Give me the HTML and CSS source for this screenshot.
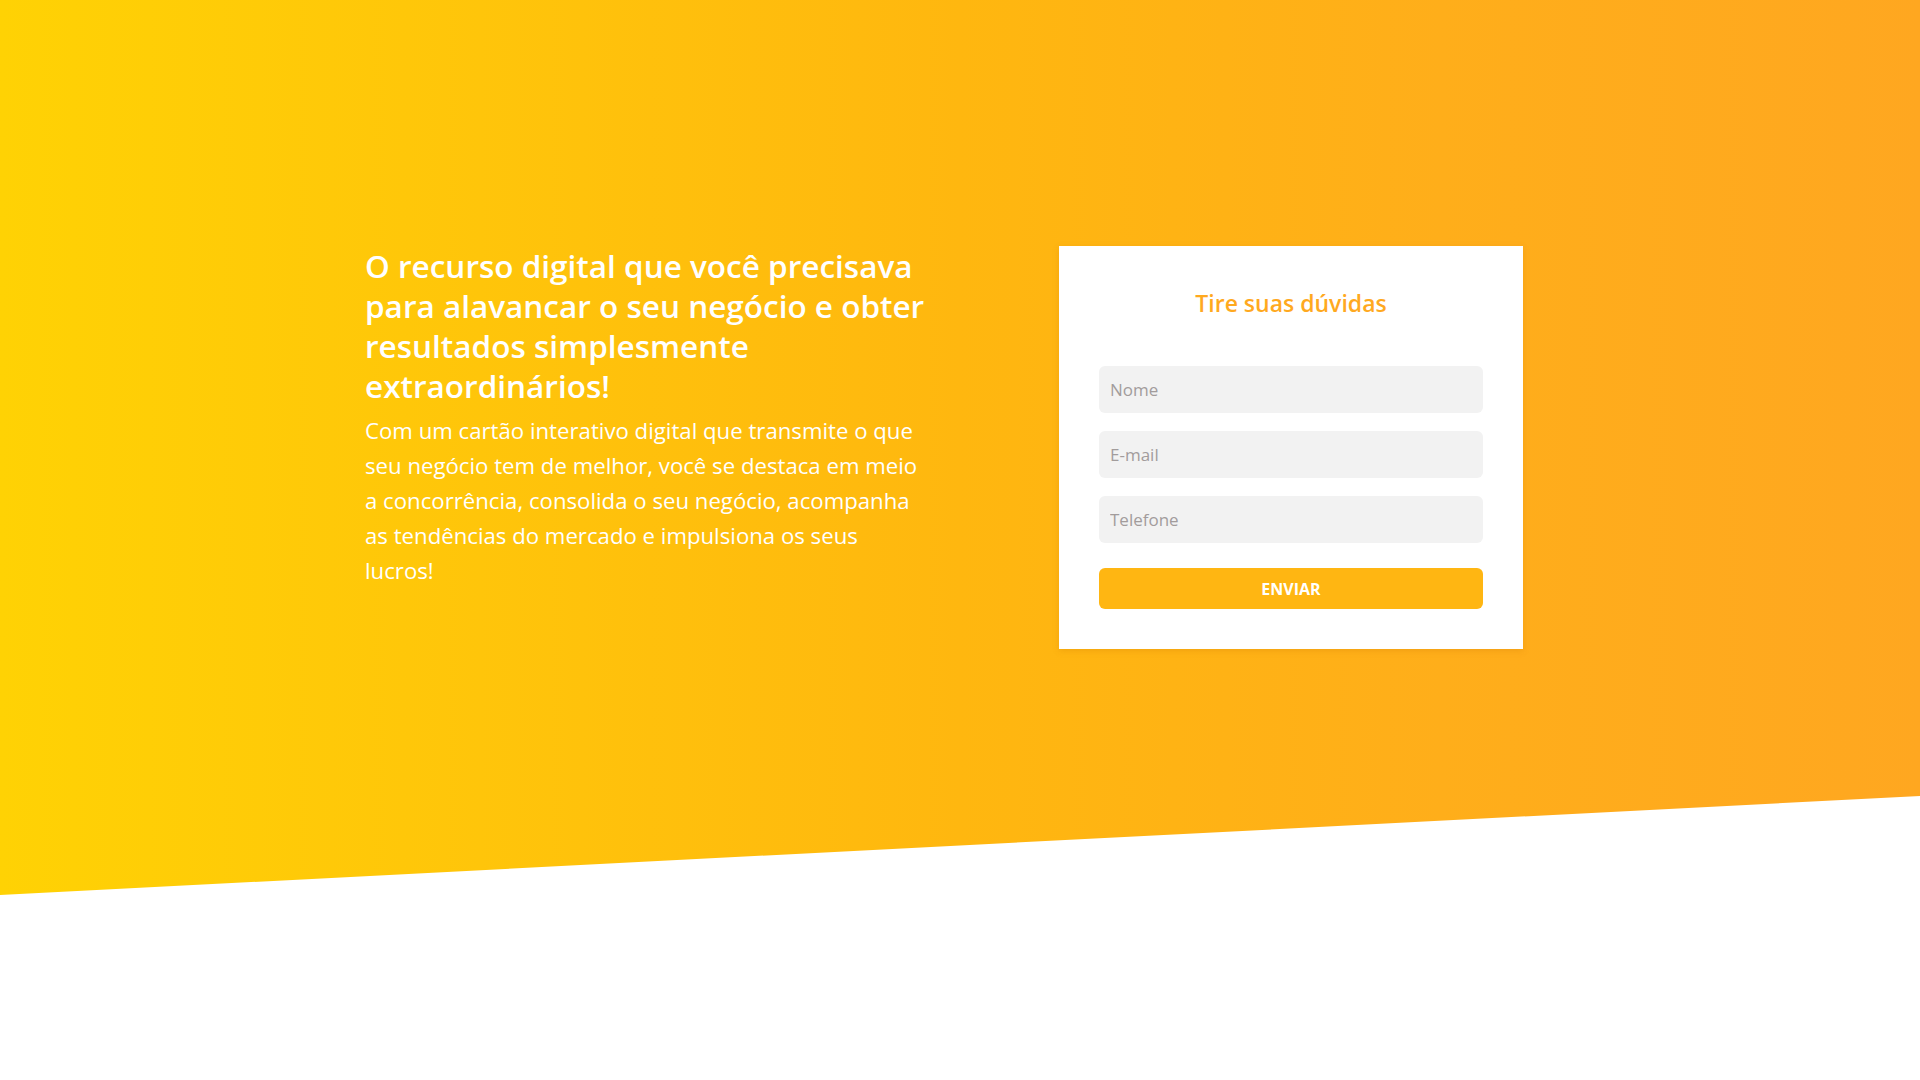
FILE: index.html
```html
<!DOCTYPE html>
<html lang="pt-BR">
<head>
<meta charset="utf-8">
<title>Cartão interativo digital</title>
<link rel="stylesheet" href="styles.css">
</head>
<body>
<section class="hero">
  <div class="hero-inner">
    <div class="intro">
      <h1 class="intro-title">O recurso digital que você precisava para alavancar o seu negócio e obter resultados simplesmente extraordinários!</h1>
      <p class="intro-text">Com um cartão interativo digital que transmite o que seu negócio tem de melhor, você se destaca em meio a concorrência, consolida o seu negócio, acompanha as tendências do mercado e impulsiona os seus lucros!</p>
    </div>
    <form class="card">
      <h2 class="card-title">Tire suas dúvidas</h2>
      <input class="field" type="text" placeholder="Nome">
      <input class="field" type="email" placeholder="E-mail">
      <input class="field" type="tel" placeholder="Telefone">
      <button class="btn" type="button">ENVIAR</button>
    </form>
  </div>
</section>
</body>
</html>
```
FILE: styles.css
```css
* { box-sizing: border-box; }
html, body { margin: 0; padding: 0; }
body {
  font-family: "Open Sans", "Noto Sans", sans-serif;
  background: #fff;
  min-height: 1080px;
}
.hero {
  height: 895px;
  background: linear-gradient(to right, #ffd204 0%, #ffc50a 25%, #ffb70f 50%, #ffae1a 75%, #ffa720 100%);
  clip-path: polygon(0 0, 100% 0, 100% 796px, 0 100%);
  padding-top: 246px;
}
.hero-inner {
  display: flex;
  align-items: flex-start;
  justify-content: space-between;
  width: 1158px;
  margin-left: 365px;
}
.intro {
  width: 560px;
  padding-top: 0;
  color: #fff;
}
.intro-title {
  margin: 0;
  font-size: 31.5px;
  line-height: 40px;
  font-weight: 600;
}
.intro-text {
  margin: 7px 0 0;
  font-size: 22.2px;
  line-height: 35px;
  font-weight: 400;
}
.card {
  width: 464px;
  background: #fff;
  padding: 40px 40px 40px;
  box-shadow: 0 2px 6px rgba(200, 120, 0, 0.25);
  display: flex;
  flex-direction: column;
}
.card-title {
  margin: 0 0 46px;
  text-align: center;
  color: #ffa91f;
  font-size: 23px;
  line-height: 34px;
  font-weight: 600;
}
.field {
  height: 47px;
  border: none;
  border-radius: 6px;
  background: #f2f2f2;
  padding: 0 11px;
  margin-bottom: 18px;
  font-family: inherit;
  font-size: 17px;
  color: #555;
  outline: none;
}
.field::placeholder { color: #a29c9c; }
.btn {
  margin-top: 7px;
  height: 41px;
  border: none;
  border-radius: 6px;
  background: #ffb612;
  color: #fff;
  font-family: inherit;
  font-weight: 700;
  font-size: 16px;
  cursor: pointer;
}
```
